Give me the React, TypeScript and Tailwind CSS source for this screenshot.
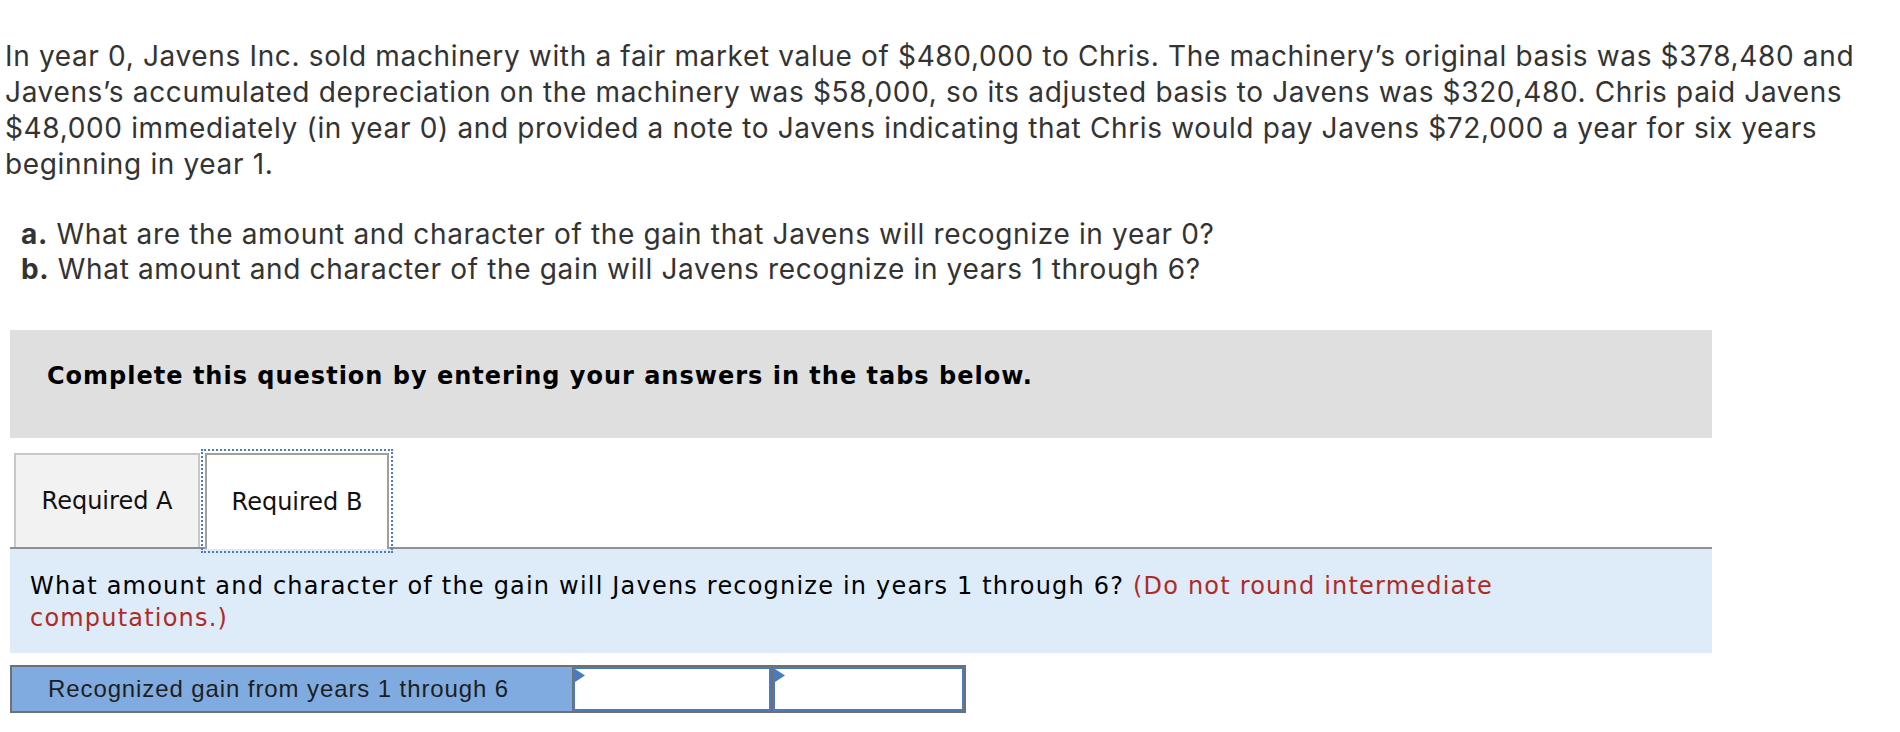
import React from "react";

const lines = [
  "In year 0, Javens Inc. sold machinery with a fair market value of $480,000 to Chris. The machinery\u2019s original basis was $378,480 and",
  "Javens\u2019s accumulated depreciation on the machinery was $58,000, so its adjusted basis to Javens was $320,480. Chris paid Javens",
  "$48,000 immediately (in year 0) and provided a note to Javens indicating that Chris would pay Javens $72,000 a year for six years",
  "beginning in year 1.",
];

function Flag() {
  return (
    <svg width="10" height="13" viewBox="0 0 10 13" className="shrink-0">
      <polygon points="0,0 10,6.5 0,13" fill="#4a7bbd" />
    </svg>
  );
}

export default function App() {
  return (
    <div className="w-[1900px] min-h-[732px] bg-white text-[#333]">
      {/* Problem statement */}
      <div className="pt-[38px] pl-[5px] font-['Inter',sans-serif] text-[28px] leading-[36px] tracking-[0.65px] whitespace-nowrap">
        {lines.map((l) => (
          <div key={l}>{l}</div>
        ))}
      </div>

      <div className="mt-[35px] pl-[21px] font-['Inter',sans-serif] text-[28px] leading-[35px] tracking-[0.65px] whitespace-nowrap">
        <div>
          <span className="font-bold">a.</span> What are the amount and character of the gain that Javens will recognize in year 0?
        </div>
        <div>
          <span className="font-bold">b.</span> What amount and character of the gain will Javens recognize in years 1 through 6?
        </div>
      </div>

      {/* Instructions bar */}
      <div className="ml-[10px] mt-[43px] w-[1702px] h-[108px] bg-[#dfdfdf] pt-[30px] pl-[37px] font-['DejaVu_Sans',Verdana,sans-serif] font-bold text-[24px] leading-[32px] tracking-[1px] text-black">
        Complete this question by entering your answers in the tabs below.
      </div>

      {/* Tabs */}
      <div className="ml-[10px] w-[1702px] pt-[15px] pl-[4px] flex items-end border-b-2 border-[#909090] font-['DejaVu_Sans',Verdana,sans-serif] text-[24px] text-[#111]">
        <div className="w-[186px] h-[94px] bg-[#f2f2f2] border-2 border-b-0 border-[#c8c8c8] flex items-center justify-center">
          Required A
        </div>
        <div className="relative z-10 ml-[5px] -mb-[2px] w-[184px] h-[96px] bg-white border-2 border-b-0 border-[#a0a0a0] flex items-center justify-center outline-2 outline-dotted outline-[#4a7bc5] outline-offset-2">
          Required B
        </div>
      </div>

      {/* Question panel */}
      <div className="ml-[10px] w-[1702px] h-[104px] bg-[#deebf8] pt-[21px] pl-[20px] font-['DejaVu_Sans',Verdana,sans-serif] text-[24px] leading-[32px] tracking-[1.2px] text-black whitespace-nowrap">
        <div>
          What amount and character of the gain will Javens recognize in years 1 through 6?{" "}
          <span className="text-[#b02a26]">(Do not round intermediate</span>
        </div>
        <div className="text-[#b02a26]">computations.)</div>
      </div>

      {/* Answer table */}
      <div className="ml-[10px] mt-[12px] w-[956px] h-[48px] border-2 border-[#707070] bg-[#707070] flex">
        <div className="w-[560px] bg-[#80abe0] flex items-center pl-[36px] font-['Liberation_Sans',Arial,sans-serif] text-[24px] tracking-[0.9px] text-[#1e1e1e]">
          Recognized gain from years 1 through 6
        </div>
        <div className="ml-[1px] w-[198px] bg-white border-2 border-[#4a7bbd] flex items-start">
          <Flag />
        </div>
        <div className="ml-[2px] flex-1 bg-white border-2 border-[#4a7bbd] flex items-start">
          <Flag />
        </div>
      </div>
    </div>
  );
}
